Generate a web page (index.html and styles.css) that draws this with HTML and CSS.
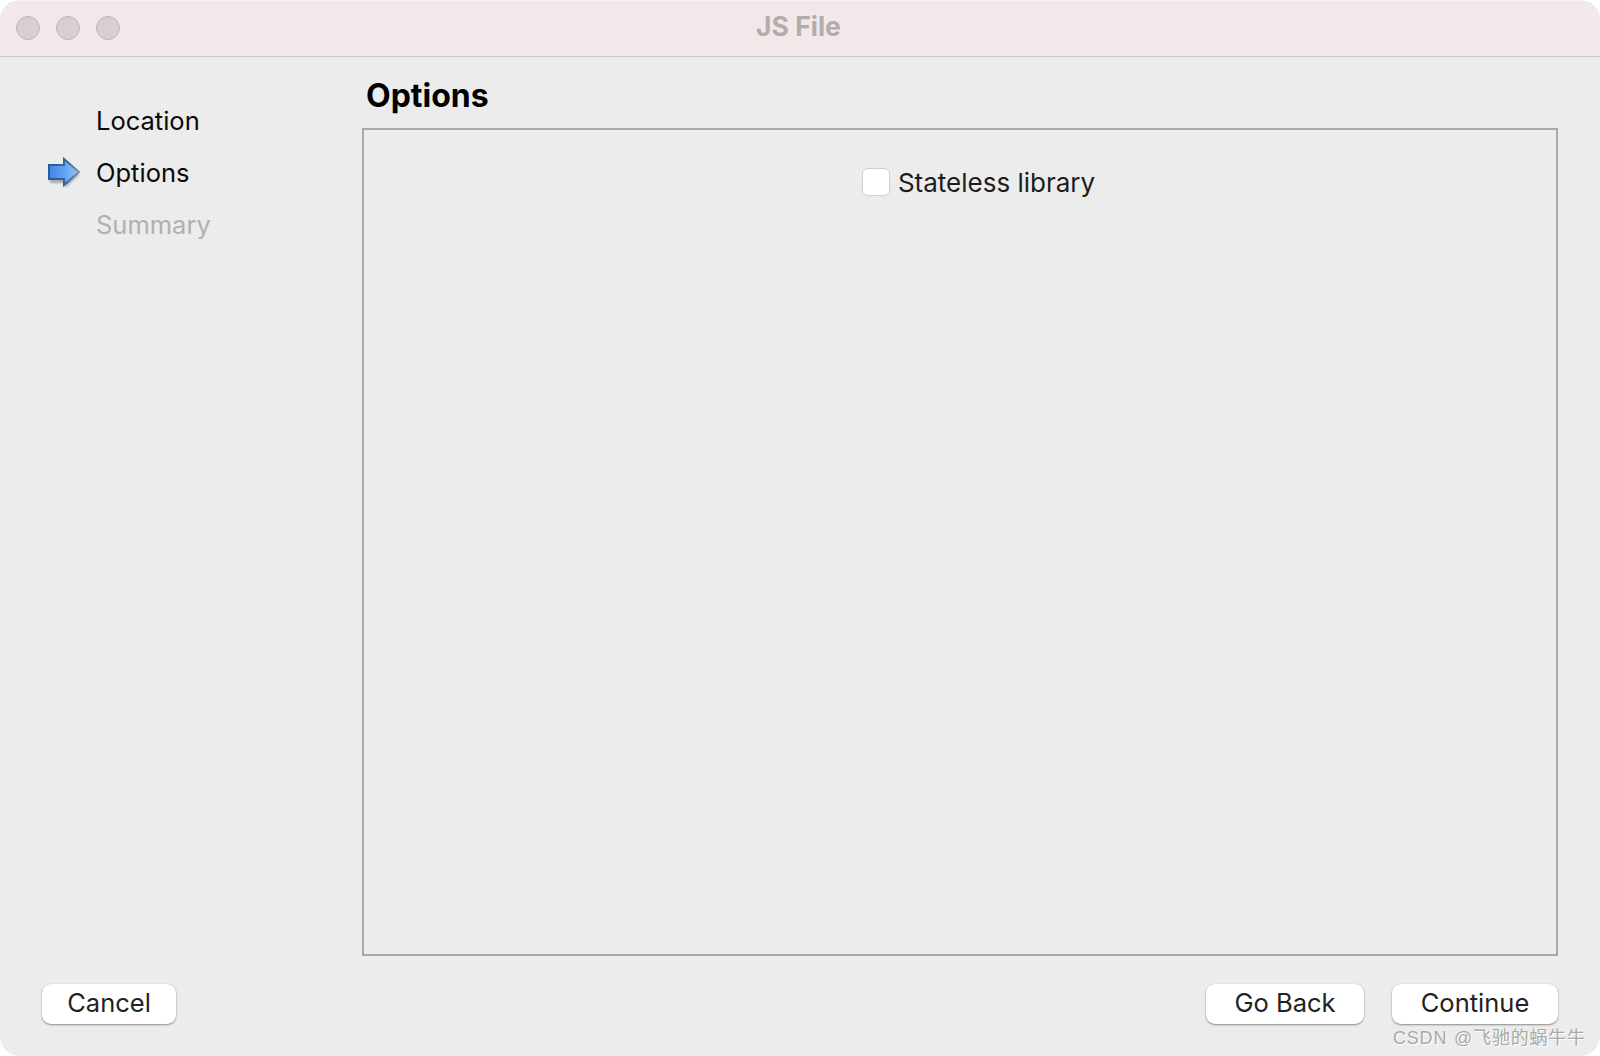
FILE: index.html
```html
<!DOCTYPE html>
<html lang="en">
<head>
<meta charset="utf-8">
<title>JS File</title>
<link rel="stylesheet" href="styles.css">
</head>
<body>
<div class="window">
  <header class="titlebar">
    <div class="lights"><span class="light"></span><span class="light"></span><span class="light"></span></div>
    <div class="title">JS File</div>
  </header>
  <div class="main">
    <nav class="steps">
      <div class="step"><span class="step-icon"></span>Location</div>
      <div class="step"><span class="step-icon">
        <svg width="34" height="32" viewBox="0 -2 34 32">
          <defs>
            <linearGradient id="arrowFill" x1="0" y1="0" x2="1" y2="0">
              <stop offset="0" stop-color="#3f86ea"/>
              <stop offset="0.55" stop-color="#66a3f4"/>
              <stop offset="1" stop-color="#9cc4f6"/>
            </linearGradient>
            <linearGradient id="arrowEdge" x1="0" y1="0" x2="1" y2="0">
              <stop offset="0" stop-color="#2a5a9a"/>
              <stop offset="0.6" stop-color="#35679f"/>
              <stop offset="1" stop-color="#7f93a8"/>
            </linearGradient>
            <filter id="arrowBlur" x="-20%" y="-20%" width="140%" height="140%">
              <feGaussianBlur stdDeviation="1"/>
            </filter>
          </defs>
          <path d="M2 9H17V3L31 15 17 28V23H2Z" fill="#000" opacity=".28" filter="url(#arrowBlur)" transform="translate(0 2)"/>
          <path d="M1 7H16V1L31 14 16 27V21H1Z" fill="url(#arrowFill)" stroke="url(#arrowEdge)" stroke-width="2"/>
        </svg>
      </span>Options</div>
      <div class="step step-off"><span class="step-icon"></span>Summary</div>
    </nav>
    <section class="content">
      <h1 class="heading">Options</h1>
      <div class="panel">
        <label class="check"><span class="box"></span>Stateless library</label>
      </div>
    </section>
  </div>
  <footer class="footer">
    <button class="btn btn-cancel">Cancel</button>
    <div class="right">
      <button class="btn btn-back">Go Back</button>
      <button class="btn btn-next">Continue</button>
    </div>
  </footer>
  <div class="mark">CSDN @飞驰的蜗牛牛</div>
</div>
</body>
</html>
```
FILE: styles.css
```css
html, body { margin: 0; padding: 0; background: #fff; }
body { width: 1600px; height: 1056px; overflow: hidden; font-family: Inter, "Noto Sans", sans-serif; }
.window { position: relative; width: 1600px; height: 1056px; background: #ececec; border-radius: 20px; overflow: hidden; display: flex; flex-direction: column; box-sizing: border-box; }
.titlebar { position: relative; flex: none; height: 57px; box-sizing: border-box; background: #f2e8e9; border-bottom: 1px solid #cdcaca; box-shadow: inset 0 1px 0 #f8f3f3; display: flex; align-items: center; justify-content: center; }
.lights { position: absolute; left: 16px; top: 16px; display: flex; gap: 16px; }
.light { width: 24px; height: 24px; box-sizing: border-box; border-radius: 50%; background: #d9cfd1; border: 1px solid #bfb5b7; }
.title { font-size: 26.5px; font-weight: 700; color: #b3acad; margin-top: -5px; margin-right: 3px; }
.main { flex: 1; display: flex; min-height: 0; }
.steps { width: 362px; flex: none; box-sizing: border-box; padding: 37px 0 0 48px; }
.step { height: 52px; display: flex; align-items: center; font-size: 25.5px; color: #0a0a0a; }
.step-off { color: #b0b0b0; }
.step-icon { width: 48px; flex: none; display: flex; align-items: center; }
.content { flex: 1; display: flex; flex-direction: column; padding-right: 42px; min-width: 0; }
.heading { margin: 0 0 0 4px; height: 71px; box-sizing: border-box; padding-top: 19px; font-size: 32px; line-height: 40px; font-weight: 700; color: #000; }
.panel { flex: 1; box-sizing: border-box; border: 2px solid #a8a8a8; display: flex; justify-content: center; align-items: flex-start; padding: 38px 0 0 37px; }
.check { display: flex; align-items: flex-start; font-size: 26px; line-height: 30px; color: #1d1d1d; }
.box { width: 28px; height: 28px; box-sizing: border-box; margin-right: 8px; background: #fff; border: 1px solid #cfcfcf; border-radius: 6px; }
.footer { flex: none; height: 100px; box-sizing: border-box; padding: 28px 42px 32px; display: flex; justify-content: space-between; }
.right { display: flex; gap: 28px; }
.btn { height: 40px; padding: 0 0 2px; border: 0; border-radius: 9px; background: #fff; box-shadow: 0 1px 2px rgba(0,0,0,.4), 0 0 1px rgba(0,0,0,.15); font: 25.5px/38px Inter, "Noto Sans", sans-serif; color: #222; }
.btn-cancel { width: 134px; }
.btn-back { width: 158px; }
.btn-next { width: 166px; }
.mark { position: absolute; left: 1393px; top: 1026px; font: 18px/24px "Liberation Sans", "Noto Sans CJK SC", sans-serif; letter-spacing: .8px; word-spacing: 1px; color: #a9a9a9; text-shadow: 1px 1px 0 #fff; white-space: nowrap; }
```
